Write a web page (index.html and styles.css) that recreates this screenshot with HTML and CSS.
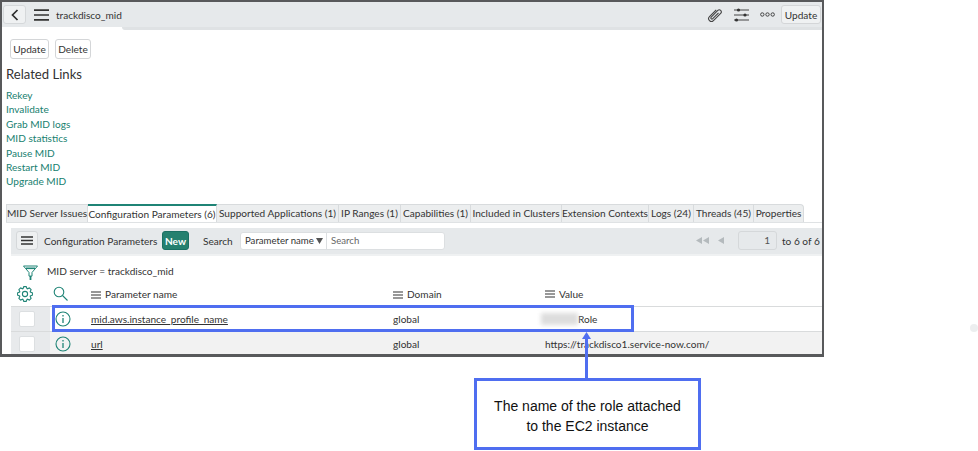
FILE: index.html
```html
<!DOCTYPE html>
<html lang="en">
<head>
<meta charset="utf-8">
<title>trackdisco_mid</title>
<link rel="stylesheet" href="styles.css">
</head>
<body>
<div class="stage">
  <div class="window">
    <header class="topbar">
      <button class="back" aria-label="Back"><svg width="10" height="12" viewBox="0 0 10 12"><path d="M7.5 1 2.500 6l5 5" fill="none" stroke="#2e2e2e" stroke-width="1.700"/></svg></button>
      <svg class="burger" width="15" height="12" viewBox="0 0 15 12"><path d="M0 1.200h15M0 6h15M0 10.800h15" stroke="#333" stroke-width="1.700"/></svg>
      <span class="title">trackdisco_mid</span>
      <span class="spacer"></span>
      <svg class="clip" width="16" height="16" viewBox="0 0 16 16"><g transform="rotate(45 8 8)" fill="none" stroke="#444" stroke-width="1.100"><path d="M5.200 3.500v9.500a2.800 2.800 0 0 0 5.600 0V2.800a2 2 0 0 0-4 0v9.400a1.100 1.100 0 0 0 2.200 0V4"/></g></svg>
      <svg class="sliders" width="15" height="14" viewBox="0 0 15 14"><path d="M0 2h15M0 7h15M0 12h15" stroke="#444" stroke-width="1"/><circle cx="4.500" cy="2" r="1.600" fill="#333"/><circle cx="11" cy="7" r="1.600" fill="#333"/><circle cx="2.500" cy="12" r="1.600" fill="#333"/></svg>
      <svg class="dots" width="15" height="5" viewBox="0 0 15 5"><g fill="none" stroke="#444" stroke-width="1"><circle cx="2.300" cy="2.500" r="1.700"/><circle cx="7.500" cy="2.500" r="1.700"/><circle cx="12.700" cy="2.500" r="1.700"/></g></svg>
      <button class="btn btn-top">Update</button>
    </header>
    <div class="under-bar"><span class="under-tab"></span></div>
    <main class="content">
      <div class="actions">
        <button class="btn">Update</button>
        <button class="btn">Delete</button>
      </div>
      <h2 class="related">Related Links</h2>
      <ul class="links">
        <li>Rekey</li>
        <li>Invalidate</li>
        <li>Grab MID logs</li>
        <li>MID statistics</li>
        <li>Pause MID</li>
        <li>Restart MID</li>
        <li>Upgrade MID</li>
      </ul>
      <nav class="tabs">
        <span class="tab t1">MID Server Issues</span>
        <span class="tab t2 active">Configuration Parameters (6)</span>
        <span class="tab t3">Supported Applications (1)</span>
        <span class="tab t4">IP Ranges (1)</span>
        <span class="tab t5">Capabilities (1)</span>
        <span class="tab t6">Included in Clusters</span>
        <span class="tab t7">Extension Contexts</span>
        <span class="tab t8">Logs (24)</span>
        <span class="tab t9">Threads (45)</span>
        <span class="tab t10">Properties</span>
      </nav>
      <section class="panel">
        <div class="listbar">
          <button class="menu-btn" aria-label="Menu"><svg width="12" height="9" viewBox="0 0 12 9"><path d="M0 1h12M0 4.500h12M0 8h12" stroke="#333" stroke-width="1.300"/></svg></button>
          <span class="list-title">Configuration Parameters</span>
          <button class="new">New</button>
          <span class="search-label">Search</span>
          <span class="search">
            <span class="search-field">Parameter name<svg width="7" height="6" viewBox="0 0 7 6"><path d="M0 0h7L3.500 6z" fill="#555"/></svg></span>
            <span class="search-input">Search</span>
          </span>
          <span class="spacer"></span>
          <svg class="pager" width="29" height="7" viewBox="0 0 29 7"><path d="M6 0v7L0 3.500zM13 0v7L7 3.500zM28 0v7L22 3.500z" fill="#b4babd"/></svg>
          <span class="page">1</span>
          <span class="page-of">to 6 of 6</span>
        </div>
        <div class="filter">
          <svg class="funnel" width="15" height="15" viewBox="0 0 15 15"><g fill="none" stroke="#1f8476"><path stroke-width="1" d="M.5 1h14L9 7.500v3.600H6V7.500z"/><path stroke-width="1.600" d="M3 3.300h9"/><path stroke-width="1.800" d="M7.500 11v4"/></g></svg>
          <span>MID server = trackdisco_mid</span>
        </div>
        <div class="row head">
          <span class="c-check"><svg width="16" height="16" viewBox="0 0 16 16"><g transform="translate(8 8)" fill="none" stroke="#1f8476" stroke-width="1.100"><circle r="2.600"/><polygon points="-2,-5.300 -1.200,-7.400 1.200,-7.400 2,-5.300 2.330,-5.160 4.380,-6.080 6.080,-4.380 5.160,-2.330 5.300,-2 7.400,-1.200 7.400,1.200 5.300,2 5.160,2.330 6.080,4.380 4.380,6.080 2.330,5.160 2,5.300 1.200,7.400 -1.200,7.400 -2,5.300 -2.330,5.160 -4.380,6.080 -6.080,4.380 -5.160,2.330 -5.300,2 -7.400,1.200 -7.400,-1.200 -5.300,-2 -5.160,-2.330 -6.080,-4.380 -4.380,-6.080 -2.330,-5.160"/></g></svg></span>
          <span class="c-info"><svg width="15" height="15" viewBox="0 0 15 15"><g fill="none" stroke="#1f8476" stroke-width="1.100"><circle cx="6" cy="6" r="4.800"/><path d="m9.500 9.500 5 5"/></g></svg></span>
          <span class="c-name"><svg class="h" width="10" height="8" viewBox="0 0 10 8"><path d="M0 1h10M0 4h10M0 7h10" stroke="#333" stroke-width="1.200"/></svg>Parameter name</span>
          <span class="c-domain"><svg class="h" width="10" height="8" viewBox="0 0 10 8"><path d="M0 1h10M0 4h10M0 7h10" stroke="#333" stroke-width="1.200"/></svg>Domain</span>
          <span class="c-value"><svg class="h" width="10" height="8" viewBox="0 0 10 8"><path d="M0 1h10M0 4h10M0 7h10" stroke="#333" stroke-width="1.200"/></svg>Value</span>
        </div>
        <div class="row data">
          <span class="c-check"><i class="box"></i></span>
          <span class="c-info"><svg width="16" height="16" viewBox="0 0 16 16"><circle cx="8" cy="8" r="7" fill="none" stroke="#1f8476" stroke-width="1.100"/><path d="M8 7v5M8 4v1.600" stroke="#1f8476" stroke-width="1.300"/></svg></span>
          <span class="c-name"><span class="ul">mid.aws.instance_profile_name</span></span>
          <span class="c-domain">global</span>
          <span class="c-value"><i class="blur"></i>Role</span>
        </div>
        <div class="row data alt">
          <span class="c-check"><i class="box"></i></span>
          <span class="c-info"><svg width="16" height="16" viewBox="0 0 16 16"><circle cx="8" cy="8" r="7" fill="none" stroke="#1f8476" stroke-width="1.100"/><path d="M8 7v5M8 4v1.600" stroke="#1f8476" stroke-width="1.300"/></svg></span>
          <span class="c-name"><span class="ul">url</span></span>
          <span class="c-domain">global</span>
          <span class="c-value">https://trackdisco1.service-now.com/</span>
        </div>
      </section>
    </main>
  </div>
  <div class="highlight"></div>
  <div class="arrow-line"></div>
  <svg class="arrow-head" width="9" height="7" viewBox="0 0 9 7"><path d="M4.500 0 9 7H0z" fill="#4f6ef0"/></svg>
  <div class="callout">The name of the role attached<br>to the EC2 instance</div>
  <div class="dot"></div>
</div>
</body>
</html>
```
FILE: styles.css
```css
* { box-sizing: border-box; }
html, body { margin: 0; padding: 0; background: #fff; }
body { font-family: Lato, "Open Sans", sans-serif; color: #333; overflow: hidden; }
.stage { position: relative; width: 978px; height: 451px; }
button { font-family: inherit; }
.spacer { flex: 1; }

.window { width: 824px; height: 357px; border: 2px solid #58595b; border-bottom-width: 3px; overflow: hidden; display: flex; flex-direction: column; }

.topbar { height: 25px; flex: none; background: #e6e9eb; display: flex; align-items: center; padding: 0 0 0 1px; }
.back { width: 23px; height: 19px; padding: 0; border: 1px solid #d5d8da; border-radius: 3px; background: #eff1f2; display: flex; align-items: center; justify-content: center; }
.burger { margin: 0 0 0 8px; }
.title { margin-left: 7px; font-size: 10.100px; color: #333; }
.clip { margin-right: 11px; }
.sliders { margin-right: 11px; }
.dots { margin-right: 6px; }
.btn { font-size: 10.100px; height: 19px; padding: 0 2px; border: 1px solid #d4d6d8; border-radius: 3px; background: #fff; color: #333; }
.btn-top { background: #eff1f2; width: 40px; margin-right: 1px; }

.under-bar { height: 3px; flex: none; background: #fff; }
.under-tab { display: block; height: 3px; margin-left: 120px; background: #dfe2e4; border-radius: 0 0 0 3px; }

.content { flex: 1; padding: 9px 0 0 4px; min-height: 0; }
.actions { display: flex; gap: 6px; padding-left: 4px; }
.actions .btn { height: 20px; }
.actions .btn:first-child { width: 39px; }
.actions .btn:last-child { width: 36px; }
.related { margin: 6px 0 0 0; font-size: 13.100px; font-weight: 400; line-height: 18px; color: #333; }
.links { list-style: none; margin: 5px 0 0; padding: 0; font-size: 10.100px; line-height: 14.400px; color: #17806f; }

.tabs { display: flex; margin: 15px 0 0 0; height: 19px; border-bottom: 1px solid #dfe2e4; }
.tab { font-size: 10.100px; line-height: 17px; background: #eceeef; border: 1px solid #d8dbdd; border-bottom: 0; border-left-width: 0; white-space: nowrap; text-align: center; flex: none; }
.tab.t1 { border-left-width: 1px; }
.tab.active { background: #fff; border-top: 2px solid #1f8476; line-height: 16px; }
.t1 { width: 82px; } .t2 { width: 129px; } .t3 { width: 122px; } .t4 { width: 62px; } .t5 { width: 70px; }
.t6 { width: 91px; } .t7 { width: 87px; } .t8 { width: 45px; } .t9 { width: 60px; } .t10 { width: 50px; border-radius: 0 4px 0 0; }

.panel { margin-left: 5px; }
.listbar { height: 28px; margin-top: 5px; background: #e6e9eb; border-bottom: 2px solid #eff1f2; display: flex; align-items: center; padding: 0 0 0 5px; font-size: 10.100px; }
.menu-btn { width: 22px; height: 19px; padding: 0; border: 1px solid #d5d8da; border-radius: 3px; background: #eef0f1; display: flex; align-items: center; justify-content: center; }
.list-title { margin-left: 6px; width: 118px; white-space: nowrap; }
.new { width: 27px; height: 19px; padding: 0; border: 1px solid #1a6f63; border-radius: 3px; background: #25806f; color: #fff; font-size: 10.100px; font-weight: 700; }
.search-label { margin-left: 14px; width: 37px; }
.search { display: flex; height: 18px; width: 205px; background: #fff; border: 1px solid #dcdfe1; border-radius: 3px; }
.search-field { width: 86px; border-right: 1px solid #dcdfe1; display: flex; align-items: center; gap: 2px; padding-left: 4px; font-size: 9.600px; white-space: nowrap; }
.search-input { padding-left: 4px; line-height: 16px; color: #666; font-size: 9.600px; }
.pager { margin-right: 13px; }
.page { width: 39px; height: 19px; border: 1px solid #d5d8da; border-radius: 3px; text-align: right; padding-right: 6px; line-height: 17px; color: #555; }
.page-of { margin-left: 5px; width: 40px; white-space: nowrap; }

.filter { display: flex; align-items: center; height: 21px; margin-top: 5px; padding-left: 12px; font-size: 10.100px; gap: 9px; }
.filter svg { margin-top: 2px; }

.row { display: flex; align-items: center; font-size: 10.100px; }
.row.head { height: 24px; }
.row.data { height: 25px; border-top: 1px solid #d9dbdc; }
.row.data.alt { background: #f2f2f2; }
.c-check { width: 39px; flex: none; padding-left: 6px; display: flex; align-items: center; align-self: stretch; }
.row.data .c-check { background: #e8eaec; padding-left: 8px; }
.c-info { width: 41px; flex: none; display: flex; }
.head .c-info { padding-left: 3px; }
.data .c-info { padding-left: 5px; }
.c-name { width: 302px; flex: none; }
.c-domain { width: 152px; flex: none; }
.c-value { flex: 1; white-space: nowrap; display: flex; align-items: center; }
.ul { text-decoration: underline; }
.h { margin-right: 4px; vertical-align: -1px; }
.box { display: block; width: 16px; height: 16px; background: #fff; border: 1px solid #dcdfe1; border-radius: 2px; }
.blur { display: block; width: 37px; height: 12px; background: #ddd; filter: blur(2px); margin-left: -4px; }

.highlight { position: absolute; left: 52px; top: 305px; width: 582px; height: 27px; border: 3px solid #4f6ef0; }
.arrow-line { position: absolute; left: 585px; top: 336px; width: 3px; height: 43px; background: #4f6ef0; }
.arrow-head { position: absolute; left: 582px; top: 332px; }
.callout { position: absolute; left: 474px; top: 378px; width: 227px; height: 72px; padding-top: 4px; border: 3px solid #4f6ef0; background: #fff; display: flex; align-items: center; justify-content: center; text-align: center; font-family: "Liberation Sans", Arial, sans-serif; font-size: 14px; line-height: 20px; color: #111; }
.dot { position: absolute; left: 970px; top: 324px; width: 8px; height: 8px; border-radius: 50%; background: #eceeef; }
```
